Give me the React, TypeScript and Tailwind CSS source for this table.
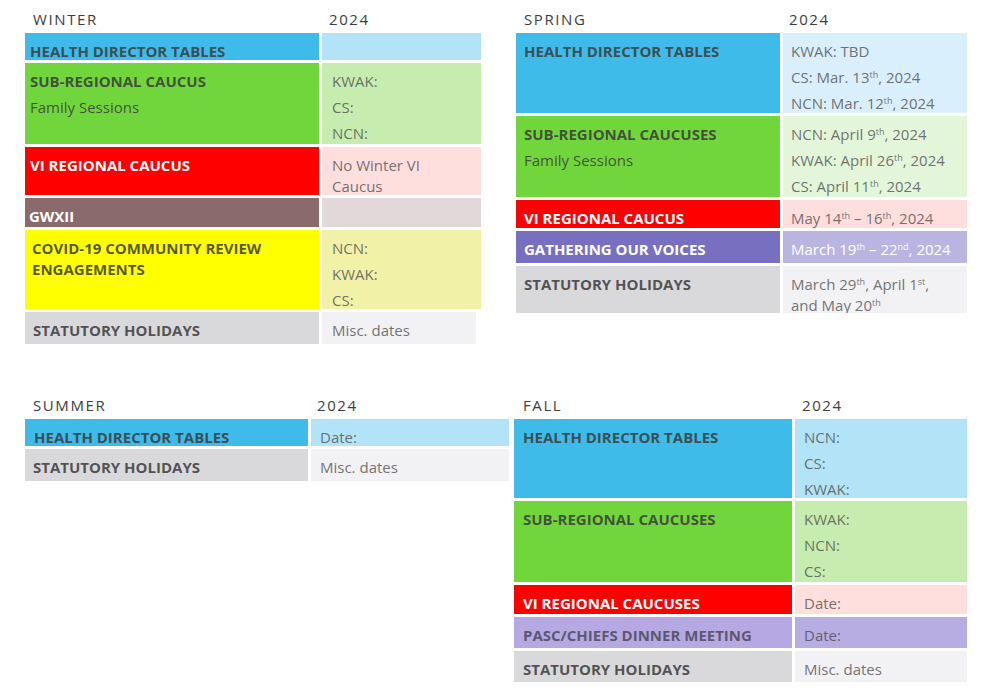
import React from "react";

const FONT = "font-['Open_Sans','Noto_Sans',sans-serif]";

type RowProps = {
  h: string;
  lw: string;
  vw: string;
  lbg: string;
  vbg: string;
  lcls: string;
  vcls: string;
  label: React.ReactNode;
  value?: React.ReactNode;
};

function Row({ h, lw, vw, lbg, vbg, lcls, vcls, label, value }: RowProps) {
  return (
    <div className={`flex gap-[3px] ${h}`}>
      <div className={`${lw} ${lbg} ${lcls} shrink-0 pt-[8px] text-[15px] font-bold leading-[21px] overflow-hidden`}>
        {label}
      </div>
      <div className={`${vw} ${vbg} ${vcls} shrink-0 pt-[8px] text-[15px] leading-[21px] overflow-hidden`}>
        {value}
      </div>
    </div>
  );
}

function Header({ lw, name, yearPad, namePad }: { lw: string; name: string; yearPad: string; namePad: string }) {
  return (
    <div className="flex h-[33px] pt-[9px] text-[15px] leading-[20px] tracking-[1.6px] text-[#3d3d3d]">
      <div className={`${lw} ${namePad} shrink-0`}>{name}</div>
      <div className={yearPad}>2024</div>
    </div>
  );
}

const Sup = ({ children }: { children: React.ReactNode }) => (
  <sup className="text-[9px] leading-[0] top-[-0.6em]">{children}</sup>
);

const P = ({ children }: { children: React.ReactNode }) => (
  <p className="[&+p]:mt-[5px]">{children}</p>
);

const DARK = "text-[#3a3a3a]/85";
const VAL = "text-[#505050]/80";

export default function App() {
  return (
    <div className={`${FONT} w-[991px] h-[696px] bg-white overflow-hidden`}>
      {/* Top section */}
      <div className="flex pl-[25px]">
        {/* WINTER */}
        <div className="w-[456px] shrink-0 flex flex-col">
          <Header lw="w-[297px]" name="WINTER" namePad="pl-[8px]" yearPad="pl-[7px]" />
          <div className="flex flex-col gap-[3px]">
            <Row h="h-[27px]" lw="w-[294px]" vw="w-[159px]" lbg="bg-[#3fbbe9]" vbg="bg-[#b3e3f6]" lcls={`${DARK} pl-[5px]`} vcls={`${VAL} pl-[10px]`}
              label="HEALTH DIRECTOR TABLES" />
            <Row h="h-[81px]" lw="w-[294px]" vw="w-[159px]" lbg="bg-[#70d63c]" vbg="bg-[#c6ecb0]" lcls={`${DARK} pl-[5px]`} vcls={`${VAL} pl-[10px]`}
              label={<><P>SUB-REGIONAL CAUCUS</P><p className="mt-[5px] font-normal">Family Sessions</p></>}
              value={<><P>KWAK:</P><P>CS:</P><P>NCN:</P></>} />
            <Row h="h-[48px]" lw="w-[294px]" vw="w-[159px]" lbg="bg-[#ff0000]" vbg="bg-[#ffdede]" lcls="text-white pl-[5px]" vcls={`${VAL} pl-[10px] pr-[40px]`}
              label="VI REGIONAL CAUCUS" value="No Winter VI Caucus" />
            <Row h="h-[29px]" lw="w-[294px]" vw="w-[159px]" lbg="bg-[#8b6a6c]" vbg="bg-[#e1d8d9]" lcls="text-white pl-[4px]" vcls={`${VAL} pl-[10px]`}
              label="GWXII" />
            <Row h="h-[79px]" lw="w-[294px]" vw="w-[159px]" lbg="bg-[#ffff00]" vbg="bg-[#f1f1a8]" lcls={`${DARK} pl-[7px] pr-[30px]`} vcls={`${VAL} pl-[10px]`}
              label="COVID-19 COMMUNITY REVIEW ENGAGEMENTS"
              value={<><P>NCN:</P><P>KWAK:</P><P>CS:</P></>} />
            <Row h="h-[32px]" lw="w-[294px]" vw="w-[154px]" lbg="bg-[#d9d8db]" vbg="bg-[#f2f1f4]" lcls={`${DARK} pl-[8px]`} vcls={`${VAL} pl-[10px]`}
              label="STATUTORY HOLIDAYS" value="Misc. dates" />
          </div>
        </div>

        {/* SPRING */}
        <div className="w-[451px] shrink-0 ml-[35px] flex flex-col">
          <Header lw="w-[267px]" name="SPRING" namePad="pl-[8px]" yearPad="pl-[6px]" />
          <div className="flex flex-col gap-[3px]">
            <Row h="h-[80px]" lw="w-[264px]" vw="w-[184px]" lbg="bg-[#3fbbe9]" vbg="bg-[#d9effb]" lcls={`${DARK} pl-[8px]`} vcls={`${VAL} pl-[8px]`}
              label="HEALTH DIRECTOR TABLES"
              value={<><P>KWAK: TBD</P><P>CS: Mar. 13<Sup>th</Sup>, 2024</P><P>NCN: Mar. 12<Sup>th</Sup>, 2024</P></>} />
            <Row h="h-[81px]" lw="w-[264px]" vw="w-[184px]" lbg="bg-[#70d63c]" vbg="bg-[#e3f6da]" lcls={`${DARK} pl-[8px]`} vcls={`${VAL} pl-[8px]`}
              label={<><P>SUB-REGIONAL CAUCUSES</P><p className="mt-[5px] font-normal">Family Sessions</p></>}
              value={<><P>NCN: April 9<Sup>th</Sup>, 2024</P><P>KWAK: April 26<Sup>th</Sup>, 2024</P><P>CS: April 11<Sup>th</Sup>, 2024</P></>} />
            <Row h="h-[28px]" lw="w-[264px]" vw="w-[184px]" lbg="bg-[#ff0000]" vbg="bg-[#ffdede]" lcls="text-white pl-[8px]" vcls={`${VAL} pl-[8px]`}
              label="VI REGIONAL CAUCUS" value={<>May 14<Sup>th</Sup> – 16<Sup>th</Sup>, 2024</>} />
            <Row h="h-[32px]" lw="w-[264px]" vw="w-[184px]" lbg="bg-[#786fc0]" vbg="bg-[#b9b4e0]" lcls="text-white pl-[8px]" vcls="text-white pl-[8px]"
              label="GATHERING OUR VOICES" value={<>March 19<Sup>th</Sup> – 22<Sup>nd</Sup>, 2024</>} />
            <Row h="h-[47px]" lw="w-[264px]" vw="w-[184px]" lbg="bg-[#d9d8db]" vbg="bg-[#f2f1f4]" lcls={`${DARK} pl-[8px]`} vcls={`${VAL} pl-[8px] pr-[10px]`}
              label="STATUTORY HOLIDAYS" value={<>March 29<Sup>th</Sup>, April 1<Sup>st</Sup>, and May 20<Sup>th</Sup></>} />
          </div>
        </div>
      </div>

      {/* Bottom section */}
      <div className="flex pl-[25px] mt-[42px]">
        {/* SUMMER */}
        <div className="w-[484px] shrink-0 flex flex-col">
          <Header lw="w-[286px]" name="SUMMER" namePad="pl-[8px]" yearPad="pl-[6px]" />
          <div className="flex flex-col gap-[3px]">
            <Row h="h-[27px]" lw="w-[283px]" vw="w-[198px]" lbg="bg-[#3fbbe9]" vbg="bg-[#b3e3f6]" lcls={`${DARK} pl-[9px]`} vcls={`${VAL} pl-[9px]`}
              label="HEALTH DIRECTOR TABLES" value="Date:" />
            <Row h="h-[32px]" lw="w-[283px]" vw="w-[198px]" lbg="bg-[#d9d8db]" vbg="bg-[#f2f1f4]" lcls={`${DARK} pl-[8px]`} vcls={`${VAL} pl-[9px]`}
              label="STATUTORY HOLIDAYS" value="Misc. dates" />
          </div>
        </div>

        {/* FALL */}
        <div className="w-[453px] shrink-0 ml-[5px] flex flex-col">
          <Header lw="w-[281px]" name="FALL" namePad="pl-[9px]" yearPad="pl-[7px]" />
          <div className="flex flex-col gap-[3px]">
            <Row h="h-[79px]" lw="w-[278px]" vw="w-[172px]" lbg="bg-[#3fbbe9]" vbg="bg-[#b3e3f6]" lcls={`${DARK} pl-[9px]`} vcls={`${VAL} pl-[9px]`}
              label="HEALTH DIRECTOR TABLES"
              value={<><P>NCN:</P><P>CS:</P><P>KWAK:</P></>} />
            <Row h="h-[81px]" lw="w-[278px]" vw="w-[172px]" lbg="bg-[#70d63c]" vbg="bg-[#c6ecb0]" lcls={`${DARK} pl-[9px]`} vcls={`${VAL} pl-[9px]`}
              label="SUB-REGIONAL CAUCUSES"
              value={<><P>KWAK:</P><P>NCN:</P><P>CS:</P></>} />
            <Row h="h-[29px]" lw="w-[278px]" vw="w-[172px]" lbg="bg-[#ff0000]" vbg="bg-[#ffdede]" lcls="text-white pl-[9px]" vcls={`${VAL} pl-[9px]`}
              label="VI REGIONAL CAUCUSES" value="Date:" />
            <Row h="h-[31px]" lw="w-[278px]" vw="w-[172px]" lbg="bg-[#b6a8e3]" vbg="bg-[#b7ade2]" lcls="text-[#4a4a5a]/85 pl-[9px]" vcls="text-[#4a4a5a]/80 pl-[9px]"
              label="PASC/CHIEFS DINNER MEETING" value="Date:" />
            <Row h="h-[31px]" lw="w-[278px]" vw="w-[172px]" lbg="bg-[#d9d8db]" vbg="bg-[#f2f1f4]" lcls={`${DARK} pl-[9px]`} vcls={`${VAL} pl-[9px]`}
              label="STATUTORY HOLIDAYS" value="Misc. dates" />
          </div>
        </div>
      </div>
    </div>
  );
}
